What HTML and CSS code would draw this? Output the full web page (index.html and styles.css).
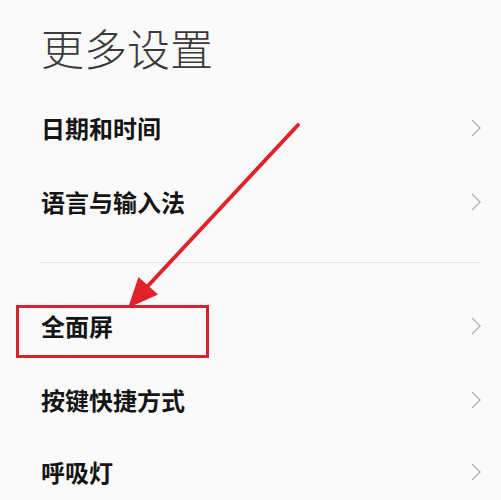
FILE: index.html
```html
<!DOCTYPE html>
<html lang="zh-CN">
<head>
<meta charset="utf-8">
<link rel="stylesheet" href="styles.css">
</head>
<body>
<div class="page">
  <h1 class="title">更多设置</h1>
  <ul class="list">
    <li class="row"><span class="label">日期和时间</span><svg class="chev" viewBox="0 0 10 18"><polyline points="1,1 9,9 1,17"/></svg></li>
    <li class="row"><span class="label">语言与输入法</span><svg class="chev" viewBox="0 0 10 18"><polyline points="1,1 9,9 1,17"/></svg></li>
  </ul>
  <div class="divider"></div>
  <ul class="list">
    <li class="row"><span class="label">全面屏</span><svg class="chev" viewBox="0 0 10 18"><polyline points="1,1 9,9 1,17"/></svg></li>
    <li class="row"><span class="label">按键快捷方式</span><svg class="chev" viewBox="0 0 10 18"><polyline points="1,1 9,9 1,17"/></svg></li>
    <li class="row row-last"><span class="label">呼吸灯</span><svg class="chev" viewBox="0 0 10 18"><polyline points="1,1 9,9 1,17"/></svg></li>
  </ul>
  <svg class="annotation" viewBox="0 0 501 500" width="501" height="500">
    <line x1="298" y1="125" x2="146" y2="288" class="shaft"/>
    <polygon points="128,308 138.5,277 158,294.5" class="head"/>
    <rect x="17.5" y="306.5" width="190" height="50" class="box"/>
  </svg>
</div>
</body>
</html>
```
FILE: styles.css
```css
* { box-sizing: border-box; }
html, body {
  margin: 0;
  padding: 0;
  background: #fafafa;
}
body {
  font-family: "Noto Sans CJK SC", "Noto Sans", sans-serif;
  width: 501px;
  height: 500px;
  overflow: hidden;
}
.page {
  position: relative;
  width: 501px;
  height: 500px;
}
.title {
  margin: 0;
  padding: 22px 0 0 41px;
  height: 91px;
  font-size: 43px;
  line-height: 50px;
  font-weight: 300;
  color: #3a3a3a;
  letter-spacing: 0;
}
.list {
  list-style: none;
  margin: 0;
  padding: 0;
}
.row {
  height: 74px;
  display: flex;
  align-items: center;
  justify-content: space-between;
  padding: 0 20px 0 41px;
}
.row-last {
  height: 70px;
}
.label {
  font-size: 24px;
  font-weight: 700;
  color: #151515;
  line-height: 30px;
}
.chev {
  width: 10px;
  height: 18px;
  fill: none;
  stroke: #b4b4b4;
  stroke-width: 1.4;
}
.divider {
  height: 1px;
  background: #e6e6e6;
  margin: 23px 21px 26px 40px;
}
.annotation {
  position: absolute;
  left: 0;
  top: 0;
  pointer-events: none;
}
.shaft {
  stroke: #e0222a;
  stroke-width: 4;
  stroke-linecap: round;
}
.head {
  fill: #e0222a;
}
.box {
  fill: none;
  stroke: #d6232b;
  stroke-width: 3;
}
```
